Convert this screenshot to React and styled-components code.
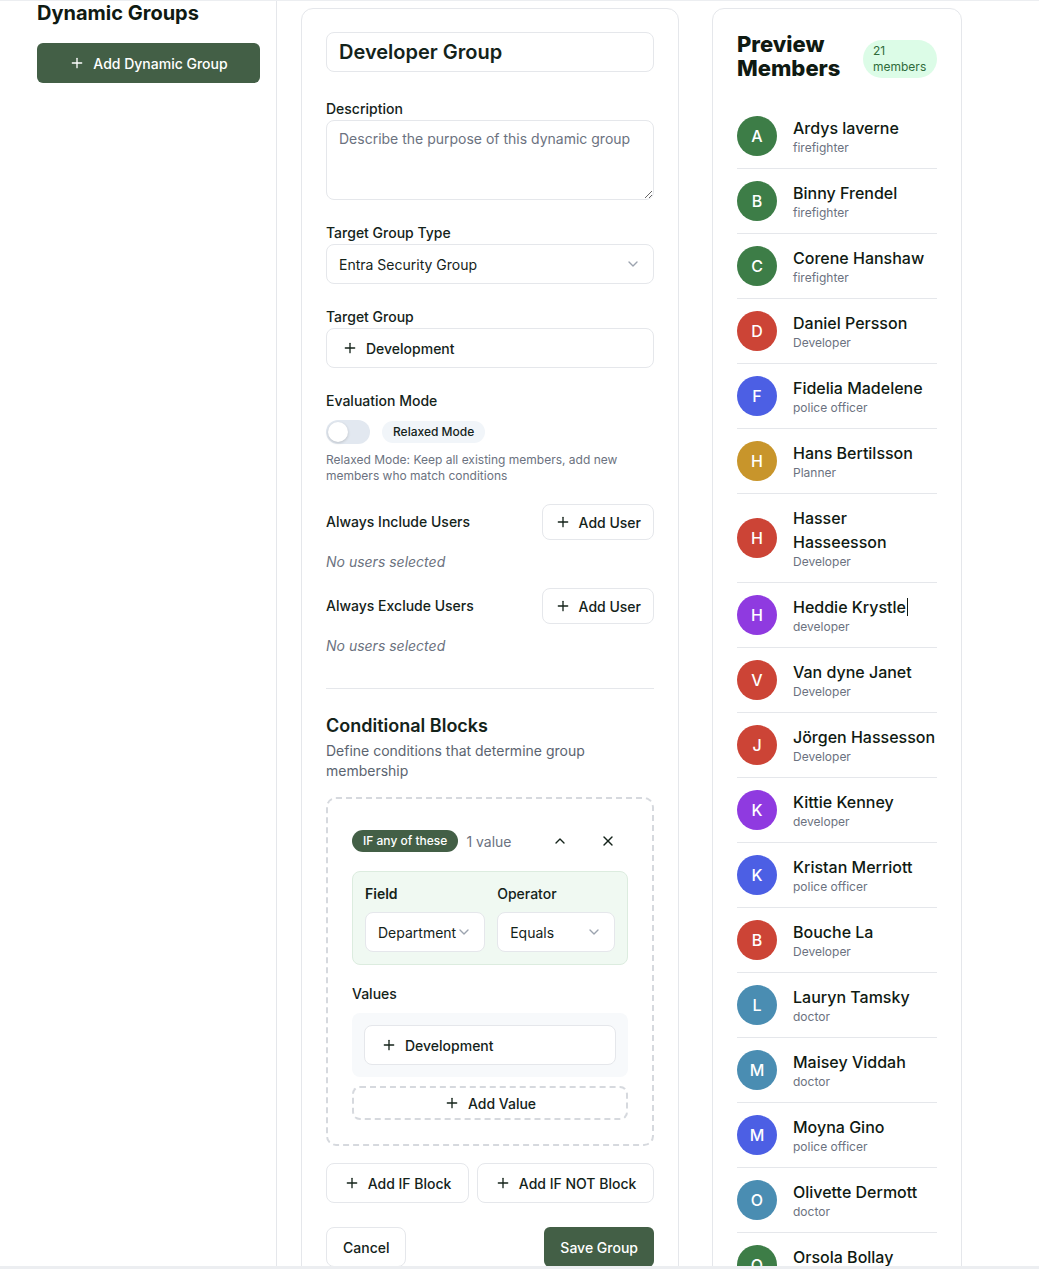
import React from 'react';
import styled, { createGlobalStyle } from 'styled-components';
import { Plus, ChevronDown, ChevronUp, X } from 'lucide-react';

const GlobalStyle = createGlobalStyle`
  * { box-sizing: border-box; }
  html, body { margin: 0; padding: 0; background: #eceef1; }
  body {
    font-family: Inter, "Noto Sans", sans-serif;
    color: #16241a;
    font-size: 14px;
  }
`;

const GREEN = '#435f46';
const BORDER = '#e5e7eb';
const MUTED = '#6b7280';
const INK = '#14231a';

const Page = styled.div`
  margin-top: 1px;
  height: 1265px;
  background: #fff;
  overflow: hidden;
  display: flex;
  align-items: flex-start;
`;

const Sidebar = styled.aside`
  width: 277px;
  flex: none;
  align-self: stretch;
  border-right: 1px solid ${BORDER};
  padding: 2px 16px 0 37px;
`;

const SideTitle = styled.h1`
  margin: 0 0 20px;
  font-size: 20px;
  line-height: 20px;
  font-weight: 700;
  color: #0f1a12;
`;

const PrimaryButton = styled.button`
  display: flex;
  align-items: center;
  justify-content: center;
  gap: 8px;
  height: 40px;
  width: ${(p) => (p.$full ? '100%' : 'auto')};
  padding: 0 16px;
  border: none;
  border-radius: 6px;
  background: ${GREEN};
  color: #fff;
  font-family: inherit;
  font-size: 14px;
  font-weight: 500;
  cursor: pointer;
`;

const Main = styled.main`
  display: flex;
  align-items: flex-start;
  gap: 33px;
  padding: 7px 0 0 24px;
`;

const Card = styled.section`
  width: ${(p) => p.$width}px;
  flex: none;
  border: 1px solid ${BORDER};
  border-radius: 12px;
  padding: 23px 24px 24px;
  background: #fff;
`;

const NameInput = styled.input`
  display: block;
  width: 100%;
  height: 40px;
  border: 1px solid ${BORDER};
  border-radius: 8px;
  padding: 0 12px;
  font-family: inherit;
  font-size: 20px;
  font-weight: 600;
  color: ${INK};
  outline: none;
`;

const Group = styled.div`
  margin-top: ${(p) => p.$mt ?? 23}px;
`;

const Label = styled.label`
  display: block;
  font-size: 14px;
  line-height: 20px;
  font-weight: ${(p) => p.$weight ?? 500};
  color: ${INK};
  margin-bottom: ${(p) => p.$mb ?? 1}px;
`;

const TextArea = styled.textarea`
  display: block;
  width: 100%;
  height: 80px;
  border: 1px solid ${BORDER};
  border-radius: 8px;
  padding: 8px 12px;
  font-family: inherit;
  font-size: 14px;
  line-height: 20px;
  color: ${INK};
  resize: vertical;
  outline: none;
  &::placeholder { color: ${MUTED}; }
`;

const SelectBox = styled.div`
  display: flex;
  align-items: center;
  justify-content: space-between;
  height: 40px;
  border: 1px solid ${BORDER};
  border-radius: 8px;
  padding: 0 12px;
  background: #fff;
  font-size: 14px;
  color: ${INK};
  white-space: nowrap;
  svg { color: #9ca3af; flex: none; }
`;

const PickerBox = styled.div`
  display: flex;
  align-items: center;
  gap: 8px;
  height: 40px;
  border: 1px solid ${BORDER};
  border-radius: 8px;
  padding: 0 15px;
  background: #fff;
  font-size: 14px;
  font-weight: 500;
  color: ${INK};
`;

const SwitchRow = styled.div`
  display: flex;
  align-items: center;
  gap: 12px;
  margin-top: 9px;
`;

const SwitchTrack = styled.div`
  width: 44px;
  height: 24px;
  border-radius: 12px;
  background: #e2e8f0;
  padding: 2px;
  display: flex;
`;

const SwitchKnob = styled.span`
  width: 20px;
  height: 20px;
  border-radius: 50%;
  background: #fff;
  box-shadow: 0 1px 3px rgba(0, 0, 0, 0.18);
`;

const SoftBadge = styled.span`
  display: inline-block;
  padding: 3px 11px;
  line-height: 16px;
  border-radius: 999px;
  background: #f1f5f9;
  font-size: 12px;
  font-weight: 500;
  color: ${INK};
`;

const HelpText = styled.p`
  margin: 8px 0 0;
  font-size: 12px;
  line-height: 16px;
  color: ${MUTED};
`;

const UserRow = styled.div`
  display: flex;
  align-items: center;
  justify-content: space-between;
  margin-top: ${(p) => p.$mt}px;
`;

const OutlineButton = styled.button`
  display: flex;
  align-items: center;
  justify-content: center;
  gap: 8px;
  height: ${(p) => p.$h ?? 40}px;
  padding: 0 ${(p) => p.$px ?? 16}px;
  flex: ${(p) => (p.$grow ? '1 1 auto' : 'none')};
  border: 1px solid ${BORDER};
  border-radius: 8px;
  background: #fff;
  font-family: inherit;
  font-size: 14px;
  font-weight: 500;
  color: ${INK};
  cursor: pointer;
`;

const EmptyNote = styled.p`
  margin: 12px 0 0;
  font-size: 14px;
  line-height: 20px;
  font-style: italic;
  color: ${MUTED};
`;

const Divider = styled.hr`
  margin: 32px 0 0;
  border: none;
  border-top: 1px solid ${BORDER};
`;

const SectionTitle = styled.h2`
  margin: 23px 0 0;
  font-size: 18px;
  line-height: 28px;
  font-weight: 600;
  color: ${INK};
`;

const SectionDesc = styled.p`
  margin: 1px 0 0;
  font-size: 14px;
  line-height: 20px;
  color: #5b6470;
`;

const DashedBlock = styled.div`
  margin-top: 16px;
  border: 2px dashed #d6d9de;
  border-radius: 10px;
  padding: 24px;
`;

const BlockHeader = styled.div`
  display: flex;
  align-items: center;
  height: 36px;
`;

const GreenPill = styled.span`
  padding: 3px 11px;
  line-height: 16px;
  border-radius: 999px;
  background: ${GREEN};
  color: #fff;
  font-size: 12px;
  font-weight: 500;
`;

const ValueCount = styled.span`
  margin-left: 8px;
  font-size: 14px;
  color: ${MUTED};
`;

const IconActions = styled.div`
  margin-left: auto;
  display: flex;
  gap: 8px;
`;

const IconButton = styled.button`
  width: 40px;
  height: 36px;
  display: flex;
  align-items: center;
  justify-content: center;
  border: none;
  background: transparent;
  color: ${INK};
  padding: 0;
  cursor: pointer;
`;

const ConditionBox = styled.div`
  margin-top: 12px;
  display: grid;
  grid-template-columns: 1fr 1fr;
  column-gap: 12px;
  row-gap: 8px;
  padding: 12px;
  border: 1px solid #dcecdf;
  border-radius: 8px;
  background: #f0f9f2;
`;

const ValuesBox = styled.div`
  margin-top: 9px;
  padding: 12px;
  border-radius: 8px;
  background: #f7f9fb;
`;

const ValueChip = styled(PickerBox)`
  padding: 0 16px;
`;

const DashedButton = styled.button`
  margin-top: 9px;
  width: 100%;
  height: 34px;
  display: flex;
  align-items: center;
  justify-content: center;
  gap: 8px;
  border: 2px dashed #d6d9de;
  border-radius: 8px;
  background: #fff;
  font-family: inherit;
  font-size: 14px;
  font-weight: 500;
  color: ${INK};
`;

const ButtonRow = styled.div`
  display: flex;
  gap: 8px;
  margin-top: ${(p) => p.$mt}px;
  justify-content: ${(p) => p.$justify ?? 'flex-start'};
`;

const PreviewHeader = styled.div`
  display: flex;
  align-items: center;
  justify-content: space-between;
  gap: 12px;
`;

const PreviewTitle = styled.h2`
  margin: 0;
  font-size: 22px;
  line-height: 24px;
  font-weight: 800;
  color: #0f1a12;
`;

const CountBadge = styled.span`
  margin-top: 6px;
  flex: none;
  width: 74px;
  padding: 3px 10px;
  line-height: 16px;
  border-radius: 19px;
  background: #dcfce7;
  color: #2f6b3a;
  font-size: 12px;
`;

const MemberList = styled.ul`
  list-style: none;
  margin: 24px 0 0;
  padding: 0;
`;

const MemberRow = styled.li`
  display: flex;
  align-items: center;
  gap: 16px;
  padding: 12px 0;
  border-bottom: 1px solid ${BORDER};
`;

const Avatar = styled.span`
  width: 40px;
  height: 40px;
  flex: none;
  border-radius: 50%;
  background: ${(p) => p.$color};
  color: #fff;
  display: flex;
  align-items: center;
  justify-content: center;
  font-size: 16px;
  font-weight: 500;
`;

const MemberText = styled.div`
  min-width: 0;
`;

const MemberName = styled.div`
  font-size: 16px;
  line-height: 24px;
  font-weight: 500;
  color: #0f1a12;
`;

const Caret = styled.span`
  display: inline-block;
  width: 1px;
  height: 18px;
  margin-left: 1px;
  vertical-align: -3px;
  background: #0f1a12;
`;

const MemberRole = styled.div`
  font-size: 12px;
  line-height: 16px;
  color: ${MUTED};
`;

const C = {
  green: '#3d7d47',
  red: '#cc4436',
  blue: '#4c5fe4',
  gold: '#c8952b',
  purple: '#8f3ae0',
  teal: '#4a8db2',
};

const members = [
  ['Ardys laverne', 'firefighter', C.green],
  ['Binny Frendel', 'firefighter', C.green],
  ['Corene Hanshaw', 'firefighter', C.green],
  ['Daniel Persson', 'Developer', C.red],
  ['Fidelia Madelene', 'police officer', C.blue],
  ['Hans Bertilsson', 'Planner', C.gold],
  ['Hasser Hasseesson', 'Developer', C.red],
  ['Heddie Krystle', 'developer', C.purple, true],
  ['Van dyne Janet', 'Developer', C.red],
  ['Jörgen Hassesson', 'Developer', C.red],
  ['Kittie Kenney', 'developer', C.purple],
  ['Kristan Merriott', 'police officer', C.blue],
  ['Bouche La', 'Developer', C.red],
  ['Lauryn Tamsky', 'doctor', C.teal],
  ['Maisey Viddah', 'doctor', C.teal],
  ['Moyna Gino', 'police officer', C.blue],
  ['Olivette Dermott', 'doctor', C.teal],
  ['Orsola Bollay', 'doctor', C.green],
];

export default function App() {
  return (
    <>
      <GlobalStyle />
      <Page>
        <Sidebar>
          <SideTitle>Dynamic Groups</SideTitle>
          <PrimaryButton $full>
            <Plus size={16} strokeWidth={2} />
            Add Dynamic Group
          </PrimaryButton>
        </Sidebar>

        <Main>
          <Card $width={378}>
            <NameInput defaultValue="Developer Group" readOnly />

            <Group $mt={27}>
              <Label>Description</Label>
              <TextArea placeholder="Describe the purpose of this dynamic group" />
            </Group>

            <Group>
              <Label>Target Group Type</Label>
              <SelectBox>
                Entra Security Group
                <ChevronDown size={16} />
              </SelectBox>
            </Group>

            <Group>
              <Label>Target Group</Label>
              <PickerBox>
                <Plus size={16} />
                Development
              </PickerBox>
            </Group>

            <Group>
              <Label>Evaluation Mode</Label>
              <SwitchRow>
                <SwitchTrack>
                  <SwitchKnob />
                </SwitchTrack>
                <SoftBadge>Relaxed Mode</SoftBadge>
              </SwitchRow>
              <HelpText>
                Relaxed Mode: Keep all existing members, add new members who match conditions
              </HelpText>
            </Group>

            <UserRow $mt={20}>
              <Label $mb={0}>Always Include Users</Label>
              <OutlineButton $h={36} $px={12}>
                <Plus size={16} />
                Add User
              </OutlineButton>
            </UserRow>
            <EmptyNote>No users selected</EmptyNote>

            <UserRow $mt={16}>
              <Label $mb={0}>Always Exclude Users</Label>
              <OutlineButton $h={36} $px={12}>
                <Plus size={16} />
                Add User
              </OutlineButton>
            </UserRow>
            <EmptyNote>No users selected</EmptyNote>

            <Divider />

            <SectionTitle>Conditional Blocks</SectionTitle>
            <SectionDesc>Define conditions that determine group membership</SectionDesc>

            <DashedBlock>
              <BlockHeader>
                <GreenPill>IF any of these</GreenPill>
                <ValueCount>1 value</ValueCount>
                <IconActions>
                  <IconButton aria-label="collapse">
                    <ChevronUp size={16} />
                  </IconButton>
                  <IconButton aria-label="remove">
                    <X size={16} />
                  </IconButton>
                </IconActions>
              </BlockHeader>

              <ConditionBox>
                <Label $weight={600} $mb={0}>Field</Label>
                <Label $weight={500} $mb={0}>Operator</Label>
                <SelectBox>
                  Department
                  <ChevronDown size={16} />
                </SelectBox>
                <SelectBox>
                  Equals
                  <ChevronDown size={16} />
                </SelectBox>
              </ConditionBox>

              <Group $mt={19}>
                <Label $mb={0}>Values</Label>
                <ValuesBox>
                  <ValueChip>
                    <Plus size={16} />
                    Development
                  </ValueChip>
                </ValuesBox>
                <DashedButton>
                  <Plus size={16} />
                  Add Value
                </DashedButton>
              </Group>
            </DashedBlock>

            <ButtonRow $mt={17}>
              <OutlineButton $grow>
                <Plus size={16} />
                Add IF Block
              </OutlineButton>
              <OutlineButton $grow>
                <Plus size={16} />
                Add IF NOT Block
              </OutlineButton>
            </ButtonRow>

            <ButtonRow $mt={24} $justify="space-between">
              <OutlineButton>Cancel</OutlineButton>
              <PrimaryButton>Save Group</PrimaryButton>
            </ButtonRow>
          </Card>

          <Card $width={250}>
            <PreviewHeader>
              <PreviewTitle>Preview Members</PreviewTitle>
              <CountBadge>21 members</CountBadge>
            </PreviewHeader>
            <MemberList>
              {members.map(([name, role, color, caret]) => (
                <MemberRow key={name}>
                  <Avatar $color={color}>{name[0]}</Avatar>
                  <MemberText>
                    <MemberName>
                      {name}
                      {caret && <Caret />}
                    </MemberName>
                    <MemberRole>{role}</MemberRole>
                  </MemberText>
                </MemberRow>
              ))}
            </MemberList>
          </Card>
        </Main>
      </Page>
    </>
  );
}
